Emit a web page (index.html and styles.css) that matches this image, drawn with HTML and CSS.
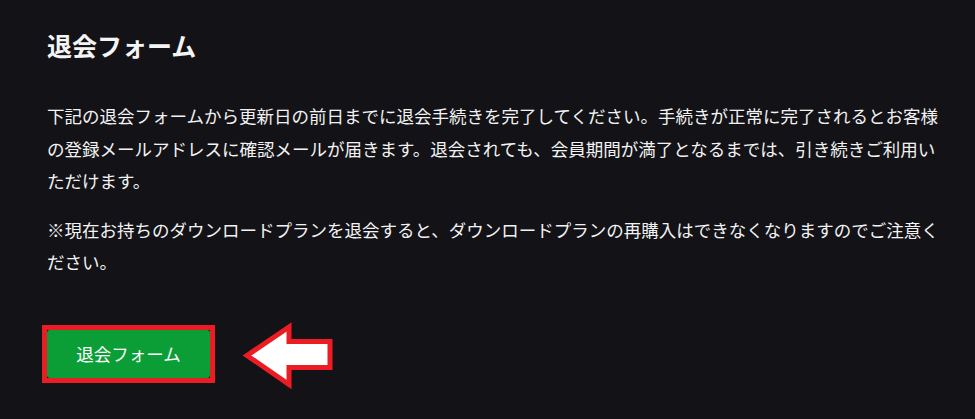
FILE: index.html
```html
<!DOCTYPE html>
<html lang="ja">
<head>
<meta charset="utf-8">
<title>退会フォーム</title>
<link rel="stylesheet" href="styles.css">
</head>
<body>
<main class="section">
  <h1 class="title">退会フォーム</h1>
  <p class="text text-first">下記の退会フォームから更新日の前日までに退会手続きを完了してください。手続きが正常に完了されるとお客様の登録メールアドレスに確認メールが届きます。退会されても、会員期間が満了となるまでは、引き続きご利用いただけます。</p>
  <p class="text text-second">※現在お持ちのダウンロードプランを退会すると、ダウンロードプランの再購入はできなくなりますのでご注意ください。</p>
  <div class="action-row">
    <div class="highlight">
      <a class="button" href="#">退会フォーム</a>
    </div>
    <svg class="arrow" width="96" height="70" viewBox="0 0 96 70" aria-hidden="true">
      <polygon points="8,35.5 50,7 50,21.5 91,21.5 91,47.5 50,47.5 50,64.5" fill="#ffffff" stroke="#ec1c24" stroke-width="5" stroke-linejoin="miter"/>
    </svg>
  </div>
</main>
</body>
</html>
```

FILE: styles.css
```css
html, body {
  margin: 0;
  padding: 0;
  background: #131217;
}

body {
  font-family: "Noto Sans CJK JP", "Noto Sans", sans-serif;
  color: #f2f2f2;
  width: 975px;
  height: 419px;
  overflow: hidden;
}

.section {
  padding: 27px 28px 0 47px;
}

.title {
  margin: 0;
  font-size: 25px;
  line-height: 36px;
  font-weight: 700;
  color: #f4f4f4;
}

.text {
  margin: 0;
  font-size: 17.5px;
  line-height: 32.5px;
  font-weight: 400;
}

.text-first {
  margin-top: 37px;
}

.text-second {
  margin-top: 16px;
}

.action-row {
  display: flex;
  align-items: center;
  gap: 24px;
  margin-top: 39px;
  margin-left: -5px;
}

.highlight {
  border: 5px solid #ec1c24;
  width: 163px;
  height: 48px;
  background: #131217;
}

.button {
  display: flex;
  align-items: center;
  justify-content: center;
  width: 100%;
  height: 100%;
  background: #0b9e36;
  border-radius: 3px;
  color: #ffffff;
  font-size: 17.5px;
  text-decoration: none;
}

.arrow {
  display: block;
  margin-top: 2px;
}
```
